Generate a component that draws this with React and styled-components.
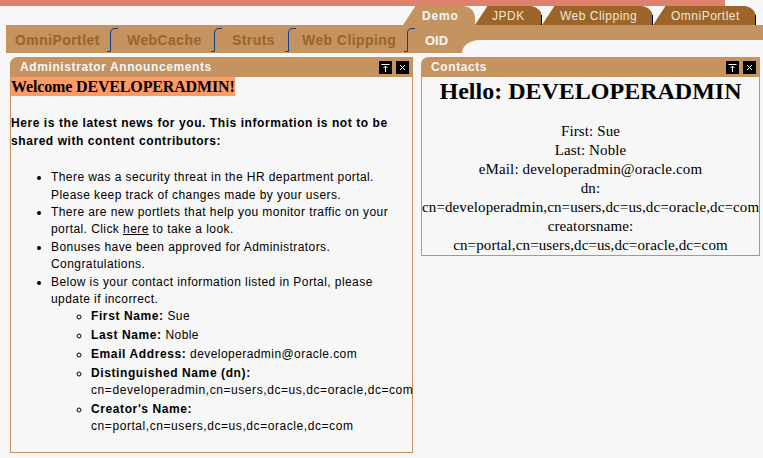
import React from 'react'
import styled, { createGlobalStyle } from 'styled-components'

const GlobalStyle = createGlobalStyle`
html, body {
  margin: 0;
  padding: 0;
  background: #f7f7f7;
}
`

const tan = '#c49360'
const brown = '#9c6429'

const topTabs = [
  { label: 'Demo', width: 72, pad: 19, active: true },
  { label: 'JPDK', width: 67, pad: 17 },
  { label: 'Web Clipping', width: 111, pad: 18 },
  { label: 'OmniPortlet', width: 103, pad: 18 },
]

const subTabs = [
  { label: 'OmniPortlet', width: 113, pad: 9 },
  { label: 'WebCache', width: 104, pad: 8 },
  { label: 'Struts', width: 74, pad: 9 },
  { label: 'Web Clipping', width: 119, pad: 5 },
  { label: 'OID', width: 46, pad: 9 },
]

const Curve = () => (
  <SubCurve width="11" height="24" viewBox="0 0 11 24">
    <path d="M0 23.5H3.5V5Q3.5 .5 8 .5H11" fill="none" stroke="#0f3f9c" strokeWidth="1" />
  </SubCurve>
)

const PinIcon = () => (
  <svg width="13" height="13" viewBox="0 0 13 13">
    <path d="M2.5 3.5H10.5M6.5 11V5M4.5 7L6.5 5L8.5 7" fill="none" stroke="#fff" strokeWidth="1" />
  </svg>
)

const CloseIcon = () => (
  <svg width="13" height="13" viewBox="0 0 13 13">
    <path d="M4 4L9 9M9 4L4 9" fill="none" stroke="#fff" strokeWidth="1" />
  </svg>
)

const PortletHeader = ({ title }) => (
  <Header>
    <HeaderTitle>{title}</HeaderTitle>
    <HeaderButtons>
      <HeaderButton><PinIcon /></HeaderButton>
      <HeaderButton><CloseIcon /></HeaderButton>
    </HeaderButtons>
  </Header>
)

const App = () => {
  return (
    <Page>
      <GlobalStyle />
      <TopStripe />
      <TabRow>
        {topTabs.map((t) => (
          <Tab key={t.label} $active={t.active} $width={t.width} $pad={t.pad}>
            {t.label}
          </Tab>
        ))}
      </TabRow>
      <SubBar>
        <SubTabs>
          {subTabs.map((t, i) => (
            <SubTab key={t.label} $width={t.width} $pad={t.pad} $last={i === subTabs.length - 1}>
              <span>{t.label}</span>
              {i < subTabs.length - 1 && <Curve />}
            </SubTab>
          ))}
        </SubTabs>
        <SubEnd>
          <SubEndCut />
        </SubEnd>
      </SubBar>
      <Columns>
        <LeftPortlet>
          <PortletHeader title="Administrator Announcements" />
          <LeftBody>
            <Welcome>Welcome DEVELOPERADMIN!</Welcome>
            <Intro>
              Here is the latest news for you. This information is not to be shared with content contributors:
            </Intro>
            <NewsList>
              <li>
                There was a security threat in the HR department portal. Please keep track of changes made by your users.
              </li>
              <li>
                There are new portlets that help you monitor traffic on your portal. Click <PlainLink href="#">here</PlainLink> to take a look.
              </li>
              <li>Bonuses have been approved for Administrators. Congratulations.</li>
              <li>
                Below is your contact information listed in Portal, please update if incorrect.
                <ContactList>
                  <ContactItem><b>First Name:</b> Sue</ContactItem>
                  <ContactItem><b>Last Name:</b> Noble</ContactItem>
                  <ContactItem><b>Email Address:</b> developeradmin@oracle.com</ContactItem>
                  <ContactItem>
                    <b>Distinguished Name (dn):</b>
                    <br />
                    <DnText>cn=developeradmin,cn=users,dc=us,dc=oracle,dc=com</DnText>
                  </ContactItem>
                  <ContactItem>
                    <b>Creator's Name:</b>
                    <br />
                    <DnText>cn=portal,cn=users,dc=us,dc=oracle,dc=com</DnText>
                  </ContactItem>
                </ContactList>
              </li>
            </NewsList>
          </LeftBody>
        </LeftPortlet>
        <RightPortlet>
          <PortletHeader title="Contacts" />
          <RightBody>
            <Hello>Hello: DEVELOPERADMIN</Hello>
            <ContactLine>First: Sue</ContactLine>
            <ContactLine>Last: Noble</ContactLine>
            <ContactLine>eMail: developeradmin@oracle.com</ContactLine>
            <ContactLine>dn:</ContactLine>
            <ContactLine>cn=developeradmin,cn=users,dc=us,dc=oracle,dc=com</ContactLine>
            <ContactLine>creatorsname:</ContactLine>
            <ContactLine>cn=portal,cn=users,dc=us,dc=oracle,dc=com</ContactLine>
          </RightBody>
        </RightPortlet>
      </Columns>
    </Page>
  )
}

export default App

const Page = styled.div`
  width: 763px;
  height: 458px;
  overflow: hidden;
  background: #f7f7f7;
  font-family: "Liberation Sans", Arial, sans-serif;
`

const TopStripe = styled.div`
  width: 725px;
  height: 6px;
  background: #df826d;
`

const TabRow = styled.div`
  display: flex;
  height: 19px;
  padding-left: 403px;
`

const Tab = styled.div`
  position: relative;
  box-sizing: border-box;
  width: ${(p) => p.$width}px;
  height: 19px;
  padding-left: ${(p) => p.$pad}px;
  background: linear-gradient(to right, transparent 12px, ${(p) => (p.$active ? tan : brown)} 12px);
  border-top-right-radius: 12px;
  color: ${(p) => (p.$active ? '#f7f7f7' : '#f0e6da')};
  font-size: 12px;
  font-weight: ${(p) => (p.$active ? 700 : 400)};
  letter-spacing: ${(p) => (p.$active ? 0.8 : 0.5)}px;
  line-height: 20px;

  &::before {
    content: '';
    position: absolute;
    left: 0;
    top: 0;
    width: 12.5px;
    height: 19px;
    background: ${(p) => (p.$active ? tan : brown)};
    clip-path: polygon(0 100%, 100% 0, 100% 100%);
  }

  &::after {
    content: '';
    position: absolute;
    right: 0;
    bottom: 0;
    width: 1px;
    height: 10px;
    background: #000;
    display: ${(p) => (p.$active ? 'none' : 'block')};
  }
`

const SubBar = styled.div`
  display: flex;
  height: 28px;
  margin-left: 6px;
`

const SubTabs = styled.div`
  display: flex;
  background: ${tan};
  width: 456px;
`

const SubTab = styled.div`
  position: relative;
  box-sizing: border-box;
  width: ${(p) => p.$width}px;
  padding-left: ${(p) => p.$pad}px;
  color: ${(p) => (p.$last ? '#f7f7f7' : brown)};
  font-size: ${(p) => (p.$last ? 13 : 14)}px;
  font-weight: 700;
  letter-spacing: ${(p) => (p.$last ? 0 : 0.42)}px;
  line-height: 31px;
`

const SubCurve = styled.svg`
  position: absolute;
  right: 1px;
  top: 3px;
`

const SubEnd = styled.div`
  flex: 1;
  background: ${tan};
`

const SubEndCut = styled.div`
  height: 13px;
  margin-top: 15px;
  background: #f7f7f7;
  border-top-left-radius: 18px 13px;
`

const Columns = styled.div`
  display: flex;
  align-items: flex-start;
  gap: 8px;
  padding: 4px 3px 0 10px;
`

const LeftPortlet = styled.section`
  box-sizing: border-box;
  width: 403px;
  height: 396px;
  border: 1px solid ${tan};
  border-top: 0;
  border-top-left-radius: 8px;
`

const RightPortlet = styled(LeftPortlet)`
  width: 339px;
  height: 199px;
`

const Header = styled.div`
  display: flex;
  align-items: center;
  justify-content: space-between;
  height: 20px;
  margin: 0 -1px;
  padding: 0 4px 0 10px;
  background: ${tan};
  border-top-left-radius: 8px;
`

const HeaderTitle = styled.h3`
  margin: 0;
  color: #f7f7f7;
  font-size: 12px;
  font-weight: 700;
  letter-spacing: 0.6px;
`

const HeaderButtons = styled.div`
  display: flex;
  gap: 4px;
`

const HeaderButton = styled.button`
  display: block;
  width: 13px;
  height: 13px;
  padding: 0;
  border: 0;
  background: #000;
`

const LeftBody = styled.div`
  color: #000;
  font-size: 12px;
  line-height: 17.4px;
  letter-spacing: 0.43px;

  b {
    letter-spacing: 0.6px;
  }
`

const Welcome = styled.div`
  display: inline-block;
  background: #ff9966;
  font-family: "Liberation Serif", "Times New Roman", serif;
  font-size: 16px;
  font-weight: 700;
  letter-spacing: -0.15px;
  line-height: 19px;
`

const Intro = styled.p`
  margin: 18px 0 0;
  font-weight: 700;
  letter-spacing: 0.57px;
`

const NewsList = styled.ul`
  margin: 19px 0 0;
  padding-left: 40px;
`

const ContactList = styled.ul`
  margin: 0;
  padding-left: 40px;
  list-style-type: circle;
`

const ContactItem = styled.li`
  margin-bottom: 1.3px;
`

const DnText = styled.span`
  letter-spacing: 0.57px;
`

const PlainLink = styled.a`
  color: #000;
`

const RightBody = styled.div`
  color: #000;
  font-family: "Liberation Serif", "Times New Roman", serif;
  font-size: 15px;
  letter-spacing: 0.12px;
  line-height: 19px;
  text-align: center;
`

const Hello = styled.h2`
  margin: 0 0 17px;
  font-size: 24px;
  font-weight: 700;
  letter-spacing: 0;
  line-height: 28px;
`

const ContactLine = styled.div``
